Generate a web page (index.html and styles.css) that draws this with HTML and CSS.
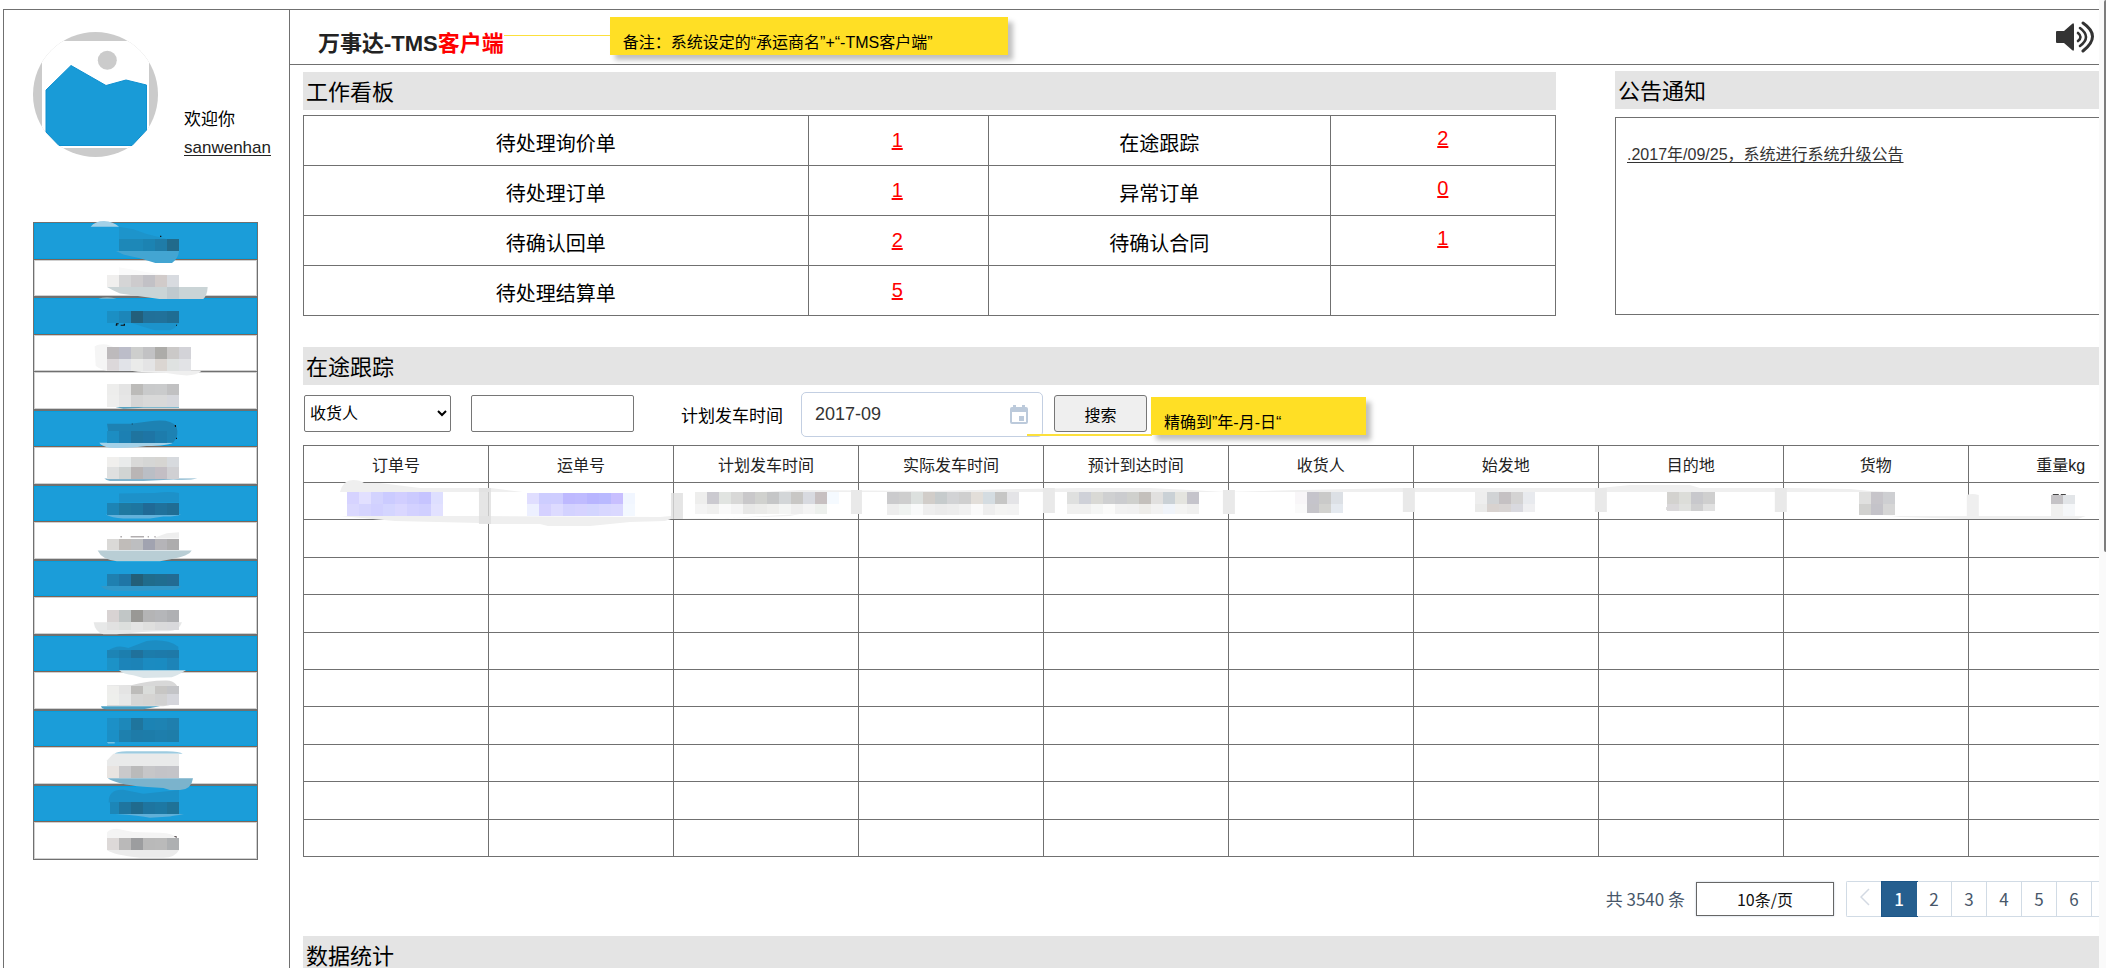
FILE: index.html
```html
<!DOCTYPE html>
<html lang="zh-CN">
<head>
<meta charset="utf-8">
<title>万事达-TMS客户端</title>
<link rel="stylesheet" href="styles.css">
</head>
<body>
<div class="shell">
  <div class="frame">
    <aside class="sidebar">
      <div class="profile">
        <svg class="avatar" viewBox="33 32 125 125" aria-hidden="true">
          <defs><clipPath id="round"><ellipse cx="95.500" cy="94.500" rx="62.500" ry="62.500"/></clipPath></defs>
          <g clip-path="url(#round)">
            <rect x="33" y="32" width="125" height="125" fill="#cbcbcb"/>
            <rect x="42" y="41" width="107" height="107" fill="#fff"/>
          </g>
          <circle cx="107.300" cy="60.300" r="9.500" fill="#cbcbcb"/>
          <path d="M46 90L71 65.500L106 85.500L126 80L146.500 85V130L132 145.500H59L46 132Z" fill="#199bd7" stroke="#0f90d0" stroke-width="1"/>
        </svg>
        <div class="hello">
          <span>欢迎你</span>
          <a href="#">sanwenhan</a>
        </div>
      </div>
      <nav class="menu" aria-label="主菜单">
        <button class="item group" aria-label="菜单一"></button>
        <button class="item" aria-label="菜单二"></button>
        <button class="item group" aria-label="菜单三"></button>
        <button class="item" aria-label="菜单四"></button>
        <button class="item" aria-label="菜单五"></button>
        <button class="item group" aria-label="菜单六"></button>
        <button class="item" aria-label="菜单七"></button>
        <button class="item group" aria-label="菜单八"></button>
        <button class="item" aria-label="菜单九"></button>
        <button class="item group" aria-label="菜单十"></button>
        <button class="item" aria-label="菜单十一"></button>
        <button class="item group" aria-label="菜单十二"></button>
        <button class="item" aria-label="菜单十三"></button>
        <button class="item group" aria-label="菜单十四"></button>
        <button class="item" aria-label="菜单十五"></button>
        <button class="item group" aria-label="菜单十六"></button>
        <button class="item" aria-label="菜单十七"></button>
        <svg class="menu-mask" viewBox="102 36 669 1914" preserveAspectRatio="none" aria-hidden="true">
          <g fill="#a3d1e8">
            <path d="M272 50Q285 33 312 33Q340 35 357 50Z"/>
            <path d="M295 266Q320 259 350 266Z" fill="#b9c9cc"/>
            <path d="M298 699H519Q505 708 440 709Q380 718 330 714Q305 710 298 699Z"/>
            <path d="M313 807H592Q570 812 520 810L430 814H330Q318 812 313 807Z" fill="#80b2cb"/>
            <path d="M343 591H537V594H430L370 597Z" fill="#55a2c0"/>
            <path d="M317 915H543Q525 922 490 921L450 927H370Q335 926 317 915Z" fill="#62b1da"/>
          </g>
          <path d="M357 50L400 58L440 72L501 87H357Z" fill="#1d94cb"/>
          <path d="M348 123H537Q535 145 516 159H466L420 145Q390 139 370 134Z" fill="#43a5d2"/>
          <path d="M321 231H537H623Q622 255 610 267H478L360 251Q340 242 321 231Z" fill="#cad4d6"/>
          <path d="M501 231H537V267H501Z" fill="#bfc9ce"/>
          <path d="M357 172L460 190L537 200V195H357Z" fill="#fafafa"/>
          <path d="M393 339H537Q530 355 510 361H465Q430 352 393 339Z" fill="#1c93cb"/>
          <path d="M284 410Q295 402 320 404L340 411H321V483Q300 479 287 468Z" fill="#f5f5f5"/>
          <path d="M393 483H605Q590 497 560 497Q530 496 500 490Q430 489 393 483Z" fill="#efefef"/>
          <path d="M321 642L393 642L450 635Q510 626 529 650Q539 680 519 699H330Z" fill="#1d82b3"/>
          <path d="M357 852L465 850Q510 845 537 850V879H357Z" fill="#1d91c9"/>
          <path d="M465 984L500 971L537 968V987H465Z" fill="#eee"/>
          <path d="M293 1023H575Q567 1040 512 1049L480 1055H350Q305 1050 293 1023Z" fill="#b9ced5"/>
          <path d="M303 1130H543Q535 1144 510 1142L420 1145H340Q310 1142 303 1130Z" fill="#3198c9"/>
          <path d="M281 1239H546Q538 1264 505 1266Q450 1264 350 1275H310Q285 1268 281 1239Z" fill="#e7e8e8"/>
          <path d="M323 1325Q350 1303 385 1316L440 1295Q500 1287 535 1312V1383H330Z" fill="#1c8dc3"/>
          <path d="M357 1383H558Q530 1400 515 1404L430 1406L400 1398Q370 1395 357 1383Z" fill="#dae5e9"/>
          <path d="M321 1429L393 1428Q450 1413 500 1414Q537 1416 537 1455V1462Q530 1488 490 1491H321Z" fill="#d8d8d8"/>
          <path d="M303 1491H480L430 1500H320Q305 1500 303 1491Z" fill="#48a0c5"/>
          <path d="M321 1600H344V1602H324Z" fill="#d0e5ed"/>
          <path d="M343 1634Q350 1627 380 1626H500Q540 1627 548 1634Z" fill="#9dcbe0"/>
          <path d="M321 1654L340 1634H537V1671H321Z" fill="#e9eaea"/>
          <path d="M323 1707H579Q575 1740 540 1743H510L490 1737L430 1733Q350 1725 323 1707Z" fill="#7bb3cc"/>
          <path d="M326 1780Q325 1740 370 1742L430 1754L537 1743V1779Z" fill="#1c90c7"/>
          <path d="M347 1815H552Q520 1821 510 1822L450 1826Q420 1820 347 1815Z" fill="#60b0d8"/>
          <path d="M321 1870Q330 1859 350 1859L400 1869L480 1871Q520 1872 530 1887H321Z" fill="#f4f4f4"/>
          <path d="M321 1923H537Q526 1946 490 1946H420Q340 1938 321 1923Z" fill="#ebebeb"/>
          <g fill="#111">
            <path d="M348 340h8v3h-4v5h-5zM371 342h4v6h-13v-3h9zM480 77h4v4h-4zM528 345h3v3h-3zM531 420h22v3h-22zM524 646h4v6h-3zM528 684h3v4h-3zM395 642h4v2h-4z"/>
            <path d="M361 981h5v2h-5zM392 981h40v2h-40zM443 981h4v2h-4zM463 981h4v2h-4zM523 1881h7v7h-3v-4h-4z" fill="#665e60"/>
          </g>
          <g data-tiles="menu"></g>
        </svg>
      </nav>
    </aside>

    <div class="page">
      <header class="topbar">
        <h1 class="brand">万事达-TMS<span class="red">客户端</span></h1>
        <span class="lead"></span>
        <p class="note note-brand">备注：系统设定的“承运商名”+“-TMS客户端”</p>
        <button class="sound" aria-label="声音">
          <svg viewBox="0 0 38 32">
            <path d="M0 11Q0 10 1 10H8L16 3Q18 1 18 4V28Q18 31 16 29L8 22H1Q0 22 0 21Z" fill="#333"/>
            <g fill="none" stroke="#333" stroke-width="2.600" stroke-linecap="round"><path d="M22 12Q27 16 22 20"/><path d="M24 7Q36 16 24 25"/><path d="M27 2Q46 15 27 30" stroke-width="3"/></g>
          </svg>
        </button>
      </header>

      <main class="content">
        <div class="overview">
          <section>
            <h2 class="bar">工作看板</h2>
            <table class="board">
              <colgroup><col class="c1"><col class="c2"><col class="c3"><col class="c4"></colgroup>
              <tr><td>待处理询价单</td><td class="num"><a href="#">1</a></td><td>在途跟踪</td><td class="num high"><a href="#">2</a></td></tr>
              <tr><td>待处理订单</td><td class="num"><a href="#">1</a></td><td>异常订单</td><td class="num high"><a href="#">0</a></td></tr>
              <tr><td>待确认回单</td><td class="num"><a href="#">2</a></td><td>待确认合同</td><td class="num high"><a href="#">1</a></td></tr>
              <tr><td>待处理结算单</td><td class="num"><a href="#">5</a></td><td></td><td></td></tr>
            </table>
          </section>
          <section class="notices">
            <h2 class="bar">公告通知</h2>
            <div class="notice-box"><a href="#">.2017年/09/25，系统进行系统升级公告</a></div>
          </section>
        </div>

        <section class="tracking">
          <h2 class="bar">在途跟踪</h2>
          <form class="filters">
            <select class="field kind" aria-label="查询类型"><option>收货人</option></select>
            <input class="field keyword" type="text" aria-label="关键字">
            <label class="date-label" for="depart">计划发车时间</label>
            <div class="date">
              <input id="depart" type="text" value="2017-09">
              <svg viewBox="0 0 18 20" aria-hidden="true"><path d="M3 0h3v2h6V0h3v2h1q2 0 2 2v13q0 2-2 2H2q-2 0-2-2V4q0-2 2-2h1zM2 7v10h14V7zM9 11h5v5H9z" fill="#bccadb" fill-rule="evenodd"/></svg>
              <span class="date-lead"></span>
            </div>
            <button class="search" type="button">搜索</button>
            <p class="note note-date">精确到”年-月-日“</p>
          </form>

          <div class="grid-wrap">
            <table class="orders">
              <thead><tr><th>订单号</th><th>运单号</th><th>计划发车时间</th><th>实际发车时间</th><th>预计到达时间</th><th>收货人</th><th>始发地</th><th>目的地</th><th>货物</th><th>重量kg</th></tr></thead>
              <tbody>
                <tr><td></td><td></td><td></td><td></td><td></td><td></td><td></td><td></td><td></td><td></td></tr>
                <tr><td></td><td></td><td></td><td></td><td></td><td></td><td></td><td></td><td></td><td></td></tr>
                <tr><td></td><td></td><td></td><td></td><td></td><td></td><td></td><td></td><td></td><td></td></tr>
                <tr><td></td><td></td><td></td><td></td><td></td><td></td><td></td><td></td><td></td><td></td></tr>
                <tr><td></td><td></td><td></td><td></td><td></td><td></td><td></td><td></td><td></td><td></td></tr>
                <tr><td></td><td></td><td></td><td></td><td></td><td></td><td></td><td></td><td></td><td></td></tr>
                <tr><td></td><td></td><td></td><td></td><td></td><td></td><td></td><td></td><td></td><td></td></tr>
                <tr><td></td><td></td><td></td><td></td><td></td><td></td><td></td><td></td><td></td><td></td></tr>
                <tr><td></td><td></td><td></td><td></td><td></td><td></td><td></td><td></td><td></td><td></td></tr>
                <tr><td></td><td></td><td></td><td></td><td></td><td></td><td></td><td></td><td></td><td></td></tr>
              </tbody>
            </table>
            <svg class="row-mask" viewBox="303 474 1851 56" preserveAspectRatio="none" aria-hidden="true">
              <g fill="#efefef">
                <path d="M340 491Q343 479 353 479Q360 479 364 482L380 482L420 487L491 487L523 491Z"/>
                <path d="M340 515L479 515L660 516L671 515V518L730 517L800 513L790 515L700 518L671 518L665 520L630 521L590 525H548L540 523H491L480 522L395 520Z"/>
                <path d="M760 491L800 489L930 490L1020 488L1080 487L1150 487L1190 489L1225 491L1300 489L1403 487H1600L1630 484H1690L1700 487H1790L1850 488L1870 490L1895 491H1600V491H760Z"/>
                <path d="M1883 514L1895 515L1967 515L2086 515L2078 518H1967L1900 516Z"/>
                <path d="M1967 494Q1972 492 1979 494V518H1967Z"/>
              </g>
              <g fill="#dedede"><path d="M479 487h12v36h-12zM671 492h12v26h-12z" fill-opacity=".8"/><path d="M851 489h11v24h-11zM1043 487h12v25h-12zM1223 489h12v24h-12zM1403 487h12v24h-12zM1595 487h12v24h-12zM1775 487h12v24h-12z" fill="#e9e9e9"/></g>
              <path d="M1667 509h2l3-3h-5zM1676 509l4-1-2-2zM1685 509h2v-3zM1691 507h3v2zM2053 493h6v1h-6zM2061 493h5v1h-5z" fill="#444"/>
              <g data-tiles="row"></g>
            </svg>
          </div>

          <div class="paging">
            <span class="total">共 3540 条</span>
            <button class="size">10条/页</button>
            <div class="pages">
              <button aria-label="上一页"><svg viewBox="0 0 10 18" class="prev"><path d="M9 1L1 9L9 17" fill="none" stroke="#d3dae3" stroke-width="1.500"/></svg></button><button class="current">1</button><button>2</button><button>3</button><button>4</button><button>5</button><button>6</button>
            </div>
          </div>
        </section>

        <h2 class="bar">数据统计</h2>
      </main>
    </div>
  </div>
  <div class="scroll"><span></span></div>
</div>
<script src="mosaic.js"></script>
</body>
</html>
```

FILE: styles.css
```css
* { box-sizing: border-box; }

body {
  margin: 0;
  font-family: "Liberation Sans", "Noto Sans CJK SC", sans-serif;
  font-size: 16px;
  color: #000;
  background: #fff;
}

h1, h2, p { margin: 0; font-weight: 400; }
button, input, select { font: inherit; color: inherit; }

.shell { display: flex; height: 100vh; overflow: hidden; padding-left: 3px; }

.frame {
  flex: 1;
  min-width: 0;
  display: flex;
  align-items: stretch;
  margin-top: 9px;
  border-top: 1px solid #707070;
  border-left: 1px solid #707070;
}

.scroll { width: 7px; display: flex; justify-content: flex-end; background: #fafafa; }
.scroll span { width: 2px; height: 57%; background: #7d7d7d; border-radius: 2px 0 0 2px; }

/* sidebar */
.sidebar { flex: none; width: 286px; padding: 22px 0 0 29px; border-right: 1px solid #707070; }
.profile { display: flex; gap: 26px; height: 125px; }
.avatar { width: 125px; height: 125px; }
.hello { display: flex; flex-direction: column; gap: 4px; padding-top: 76px; font-size: 17px; line-height: 24px; }
.hello a { color: #222; text-underline-offset: 2px; }

.menu { position: relative; width: 225px; margin-top: 65px; display: grid; grid-template-rows: repeat(8, 38px 37px) 37px; border: 1px solid #707070; border-top: 0; }
.item { border: 0; border-bottom: 1px solid #707070; background: #fff; padding: 0; box-shadow: inset 0 0 0 1px #d0d0d0; }
.item:nth-last-of-type(1) { border-bottom: 0; }
.item.group { background: #1b9dd9; border-top: 1px solid #707070; border-bottom-color: #7b6659; box-shadow: inset 0 0 0 1px #049fe0; }
.menu-mask { position: absolute; left: 0; top: 0; width: 100%; height: 100%; overflow: visible; pointer-events: none; }

/* top bar */
.page { flex: 1; min-width: 0; overflow: hidden; }
.topbar { display: flex; align-items: flex-start; height: 55px; border-bottom: 1px solid #707070; padding: 7px 5px 0 28px; }
.brand { padding-top: 12px; font-size: 22px; line-height: 30px; font-weight: 700; color: #222; white-space: nowrap; }
.red { color: #f00; }
.lead { width: 106px; height: 1px; margin-top: 18px; background: #fce03c; }
.note { flex: none; background: #ffdf25; box-shadow: 5px 5px 5px rgba(0, 0, 0, .25); white-space: nowrap; line-height: 24px; }
.note-brand { width: 398px; height: 38px; padding: 14px 13px 0; }
.sound { margin: 4px 0 0 auto; padding: 0; border: 0; background: none; width: 38px; height: 32px; }
.sound svg { display: block; width: 38px; height: 32px; }

/* content */
.content { padding: 6px 0 0 13px; }
.bar { height: 38px; padding: 0 3px; background: #e4e4e4; font-size: 22px; line-height: 42px; }
.overview { display: grid; grid-template-columns: minmax(0, 1253fr) minmax(0, 484fr); gap: 59px; }
.overview section:first-child { padding-top: 1px; }

.board { width: 100%; height: 200px; margin-top: 5px; border-collapse: collapse; table-layout: fixed; font-size: 20px; line-height: 28px; text-align: center; }
.board td { border: 1px solid #707070; padding: 6px 0 0; height: 50px; }
.board .num { padding: 0 2px 2px 0; }
.board .high { padding: 0 0 6px; }
.board a { color: #f00; text-decoration-thickness: 2px; text-underline-offset: 1px; text-decoration-skip-ink: none; }
.c1 { width: 40.3%; }
.c2 { width: 14.4%; }
.c3 { width: 27.3%; }
.c4 { width: 18%; }

.notice-box { height: 198px; margin-top: 8px; padding: 25px 11px; border: 1px solid #707070; border-right: 0; line-height: 24px; white-space: nowrap; overflow: hidden; }
.notice-box a { color: #333; text-decoration-skip-ink: none; text-underline-offset: 2px; }

.tracking { margin-top: 31px; }
.filters { display: flex; align-items: flex-start; height: 60px; padding-top: 7px; }
.field { height: 37px; margin-top: 3px; border: 1px solid #767676; border-radius: 2px; background: #fff; }
.kind { width: 147px; padding: 0 1px; margin-left: 1px; }
.keyword { width: 163px; margin-left: 20px; }
.date-label { margin: 13px 18px 0 47px; font-size: 17px; line-height: 24px; white-space: nowrap; }
.date { position: relative; width: 242px; height: 45px; display: flex; align-items: center; padding: 0 14px 0 13px; border: 1px solid #c3cfe2; border-radius: 5px; }
.date input { flex: 1; min-width: 0; border: 0; padding: 0; outline: 0; background: none; font-size: 18px; color: #333; }
.date svg { width: 18px; height: 20px; }
.date-lead { position: absolute; left: 225px; top: 41px; width: 125px; height: 2px; background: #fce03c; }
.search { width: 93px; height: 37px; margin: 3px 4px 0 11px; border: 1px solid #767676; border-radius: 3px; background: #efefef; padding: 0; }
.note-date { width: 215px; height: 38px; margin-top: 5px; padding: 14px 13px 0; }

.grid-wrap { position: relative; overflow: hidden; }
.orders { width: 103.05%; height: 412px; border-collapse: collapse; table-layout: fixed; line-height: 24px; }
.orders th, .orders td { border: 1px solid #707070; padding: 0; height: 37px; }
.orders th { font-weight: 400; color: #222; padding-top: 4px; }
.row-mask { position: absolute; left: 0; top: 30px; width: 103.05%; height: 56px; pointer-events: none; }

.paging { display: flex; justify-content: flex-end; align-items: center; height: 79px; padding-top: 4px; font-family: "Noto Sans CJK SC", sans-serif; color: #48576a; font-size: 17px; }
.total { margin-right: 11px; white-space: nowrap; }
.size { width: 138px; height: 34px; margin-right: 12px; padding: 0; border: 1px solid #666; background: #fff; color: #111; font-size: 16px; box-shadow: 0 0 2px #bfcbd9; }
.pages { display: flex; width: 253px; border: 1px solid #d1dbe5; border-right: 0; border-radius: 2px 0 0 2px; }
.pages button { width: 35px; height: 34px; padding: 0; border: 0; border-right: 1px solid #d1dbe5; background: #fff; }
.pages button:first-child { border-right: 0; }
.pages .current { background: #265f8f; border-right-color: #265f8f; color: #fff; box-shadow: 0 0 0 1px #1b5587; font-weight: 500; }
.prev { width: 10px; height: 18px; }
```

FILE: mosaic.js
```js
// Each strip: [x, y, tile width, height, colours left to right]
const strips = {
  menu: [
    [357, 87, 36, 36, "#1d88b8 #1d88b8 #1c83b2 #1f7ca8 #216a8b"],
    [321, 195, 36, 36, "#f0efee #d5d5d6 #cdcbcd #c2c1c6 #d1cbca #d8dbe0"],
    [321, 303, 36, 36, "#1b8fc4 #1c86b9 #235f7b #217099 #21719a #1f6d93"],
    [321, 411, 36, 36, "#bdbabc #bcbdc9 #cdcecd #c2c2c4 #adaca9 #cbc9c8 #d3d3d8"],
    [321, 447, 36, 36, "#dcd8da #e1e3e8 #eaebea #e4e4e5 #dbd6d2 #dfe2e1 #e2e3e6"],
    [321, 522, 36, 33, "#ededec #e4e4e4 #bcbbb9 #c9cacb #cacbcc #c1c1c2"],
    [321, 555, 36, 36, "#eeeeed #e6e6e6 #d5d5d5 #d9d9d9 #d9d9d9 #d6d7dc"],
    [321, 663, 36, 36, "#1c8dc2 #1c80b3 #1f749f #1e75a5 #1d7cac"],
    [321, 741, 36, 30, "#f0efed #e9ebeb #d9d9d8 #d5d6d5 #d6d5d2 #d7dade"],
    [321, 771, 36, 36, "#dfe0e0 #d1d4d3 #b9b5b5 #babec5 #c3bec4 #d0d0d3"],
    [321, 879, 36, 36, "#1d84b5 #1f79a0 #1e76a0 #206a96 #20719b #206d94"],
    [321, 987, 36, 36, "#dad9d7 #c0bcb9 #bdbec0 #a1a3b0 #b5b4b8 #adacad"],
    [321, 1095, 36, 36, "#1f80b0 #1f76a6 #235f78 #206c8c #206d90 #236b92"],
    [321, 1203, 36, 36, "#d8d3d3 #c1c6c6 #999895 #b4b4b5 #b5b6b9 #afb0b3"],
    [321, 1239, 36, 24, "#e1e1e1 #dcdfdd #e4e4e4 #dfdfde #dadadb #d9d9dc"],
    [321, 1323, 36, 24, "#1d84b5 #1c7eae #20719b #1c7cab #1d7aaa #1e79a8"],
    [321, 1347, 36, 36, "#1c92c7 #1c84b9 #1c83b7 #1b8bc1 #1a8bc1 #1d84b8"],
    [321, 1430, 36, 25, "#eeeeec #e4e4e4 #bdbcba #dadcda #c7c6c4 #c3c4c7"],
    [321, 1455, 36, 33, "#eeefec #e7e8e8 #d6d6d5 #d5d4d2 #d1d1d1 #d5d6dc"],
    [321, 1527, 36, 36, "#1c90c7 #1d88ba #1f759d #1c83b4 #1e83b3 #1f7fae"],
    [321, 1563, 36, 36, "#1b8fc6 #1e80ae #1e7ba8 #1d7ca9 #1e7eac #1e7da9"],
    [321, 1671, 36, 36, "#e8e4e1 #c9c9cb #bababa #c6c6c8 #c3c3c7 #c4c4c8"],
    [330, 1779, 27, 36, "#1c86b8"],
    [357, 1779, 36, 36, "#1f759f #206b8e #1e75a0 #1d78a3 #1f7297"],
    [321, 1887, 36, 36, "#ddd9d8 #bab9b9 #9c9d9f #b9b9b9 #bababa #aeb0b2"]
  ],
  row: [
    [347, 491, 12, 12, "#d6d3ff #e2e0ff #d3d3fe #cbcbff #d1ceff #cbcafe #c6c4ff #dedfff"],
    [347, 503, 12, 12, "#dad8fe #d5d4fe #d1d0ff #d4d5ff #dad7ff #d3d1ff #d0cfff #e2e1ff"],
    [527, 492, 12, 11, "#e0deff #cdcdff #cecdff #beb9ff #bfbbff #b8b5ff #b9b9ff #c8bfff #f1f6ff"],
    [527, 503, 12, 12, "#edf0ff #d5d1ff #dddbff #d3d2ff #d6d3ff #d3d5ff #d8d7ff #dad8ff #f3f8ff"],
    [695, 491, 12, 12, "#eeeeed #cbcad0 #e1e4e1 #d8d8d7 #c9c8ca #d0d1ce #c5c6c7 #d3d6d8 #c8c7c5 #d8dae0 #c7c0c1 #f5faff"],
    [695, 503, 12, 10, "#f4f4f4 #f0f0ef #fafafa #f5f5f5 #e8e8e7 #ebebe9 #efefed #f4f5f4 #eeeeee #f4f4f4 #edf0ed"],
    [887, 491, 12, 12, "#cbcbcd #cecece #dce0de #d1cdc9 #c6cbcc #d2d3d5 #cfcfcf #e2ded9 #d4dce1 #c6c6c5 #e4e4e7"],
    [887, 503, 12, 11, "#ededed #f0f3f1 #f9fafa #eeeeee #ebebeb #ededed #f1f1f1 #fafafa #eeeeee #f4f4f3 #f3f3f3"],
    [1067, 491, 12, 12, "#dfe0df #cfd1d8 #d9d9d5 #cfd0d1 #cbcccf #cfd0cd #c4c0bc #e1e0df #cad1d6 #e4e4df #c5c4cb"],
    [1067, 503, 12, 10, "#f0f0ef #f0f0ef #f5f6f5 #fbfbfa #f2f2f2 #f1f1f1 #eeedea #f2f2f2 #f0f4fa #f4f4f3 #f0f0ef"],
    [1295, 491, 12, 12, "#f8f6f8 #c5c4cb #cacac9 #dce0e5"],
    [1295, 503, 12, 9, "#fafafa #c5c4c9 #d2d2cf #e4e9ef"],
    [1475, 491, 12, 12, "#eeeeee #d1d3d5 #c5c1c3 #d4d3d3 #e8eaee"],
    [1475, 503, 12, 8, "#eaeae9 #d8d2cf #d8d4d3 #d9d9df #efeff1"],
    [1667, 491, 12, 12, "#d3d2cf #dcddd9 #c8c8cc #cfcfcf"],
    [1667, 503, 12, 7, "#dad8da #e0e1df #cfcfd0 #e1e1e1"],
    [1859, 491, 12, 12, "#e0e0df #c7c5ca #cecfd2"],
    [1859, 503, 12, 11, "#d1d1cf #c4c3c9 #d6d6d6"],
    [2051, 494, 12, 9, "#c5c3c6 #e2e5e8"],
    [2051, 503, 12, 12, "#f0f0ef #f5f7f9"]
  ]
};

document.querySelectorAll("[data-tiles]").forEach((group) => {
  strips[group.dataset.tiles].forEach(([x, y, width, height, colours]) => {
    colours.split(" ").forEach((colour, i) => {
      const tile = document.createElementNS("http://www.w3.org/2000/svg", "rect");
      tile.setAttribute("x", x + i * width);
      tile.setAttribute("y", y);
      tile.setAttribute("width", width);
      tile.setAttribute("height", height);
      tile.setAttribute("fill", colour);
      tile.setAttribute("shape-rendering", "crispEdges");
      group.appendChild(tile);
    });
  });
});
```
